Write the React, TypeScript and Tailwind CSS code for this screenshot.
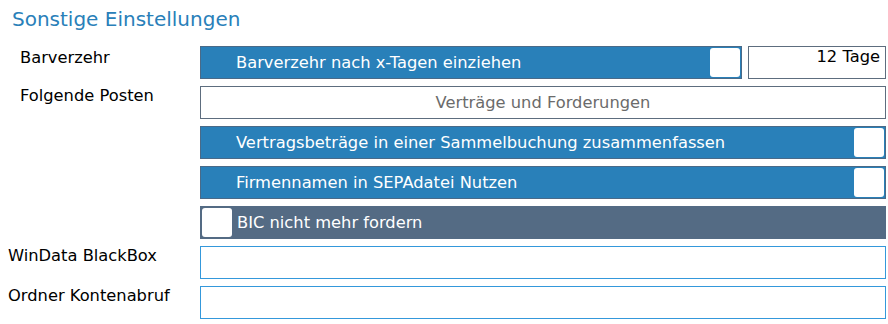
import React from "react";

const Check = ({ className = "" }: { className?: string }) => (
  <div className={"w-[30px] h-[29px] bg-white rounded-[3px] shrink-0 " + className} />
);

export default function App() {
  return (
    <div className="w-[888px] h-[324px] bg-white font-['DejaVu_Sans',sans-serif] text-[16.3px] text-black overflow-hidden">
      <div className="pl-[12px] pt-[6px] h-[46px] text-[20px] leading-[26px] text-[#2980b9]">
        Sonstige Einstellungen
      </div>

      <div className="flex flex-col gap-[7px]">
        {/* Row 1 */}
        <div className="flex h-[33px]">
          <div className="w-[200px] pl-[20px] pt-[1px] leading-[22px]">Barverzehr</div>
          <div className="flex gap-[6px]">
            <div className="w-[542px] h-[33px] bg-[#2980b9] border border-[#4a6a88] flex items-center pl-[35px] pr-[1px] text-white leading-[20px]">
              <span className="flex-1">Barverzehr nach x-Tagen einziehen</span>
              <Check />
            </div>
            <div className="w-[138px] h-[33px] border border-[#5d6d7e] text-right pr-[5px] leading-[20px]">
              12 Tage
            </div>
          </div>
        </div>

        {/* Row 2 */}
        <div className="flex h-[33px]">
          <div className="w-[200px] pl-[20px] leading-[20px]">Folgende Posten</div>
          <div className="w-[686px] h-[33px] border border-[#5d6d7e] flex items-center justify-center text-[#6b6b6b] leading-[20px]">
            Verträge und Forderungen
          </div>
        </div>

        {/* Row 3 */}
        <div className="flex h-[33px]">
          <div className="w-[200px]" />
          <div className="w-[686px] h-[33px] bg-[#2980b9] border border-[#4a6a88] flex items-center pl-[35px] pr-[1px] text-white leading-[20px]">
            <span className="flex-1">Vertragsbeträge in einer Sammelbuchung zusammenfassen</span>
            <Check />
          </div>
        </div>

        {/* Row 4 */}
        <div className="flex h-[33px]">
          <div className="w-[200px]" />
          <div className="w-[686px] h-[33px] bg-[#2980b9] border border-[#4a6a88] flex items-center pl-[35px] pr-[1px] text-white leading-[20px]">
            <span className="flex-1">Firmennamen in SEPAdatei Nutzen</span>
            <Check />
          </div>
        </div>

        {/* Row 5 */}
        <div className="flex h-[33px]">
          <div className="w-[200px]" />
          <div className="w-[686px] h-[33px] bg-[#546b84] flex items-center pl-[2px] text-white gap-[5px] leading-[20px]">
            <Check />
            <span>BIC nicht mehr fordern</span>
          </div>
        </div>

        {/* Row 6 */}
        <div className="flex h-[33px]">
          <div className="w-[200px] pl-[8px] leading-[20px]">WinData BlackBox</div>
          <div className="w-[686px] h-[33px] border border-[#3498db]" />
        </div>

        {/* Row 7 */}
        <div className="flex h-[33px]">
          <div className="w-[200px] pl-[8px] leading-[20px]">Ordner Kontenabruf</div>
          <div className="w-[686px] h-[33px] border border-[#3498db]" />
        </div>
      </div>
    </div>
  );
}
